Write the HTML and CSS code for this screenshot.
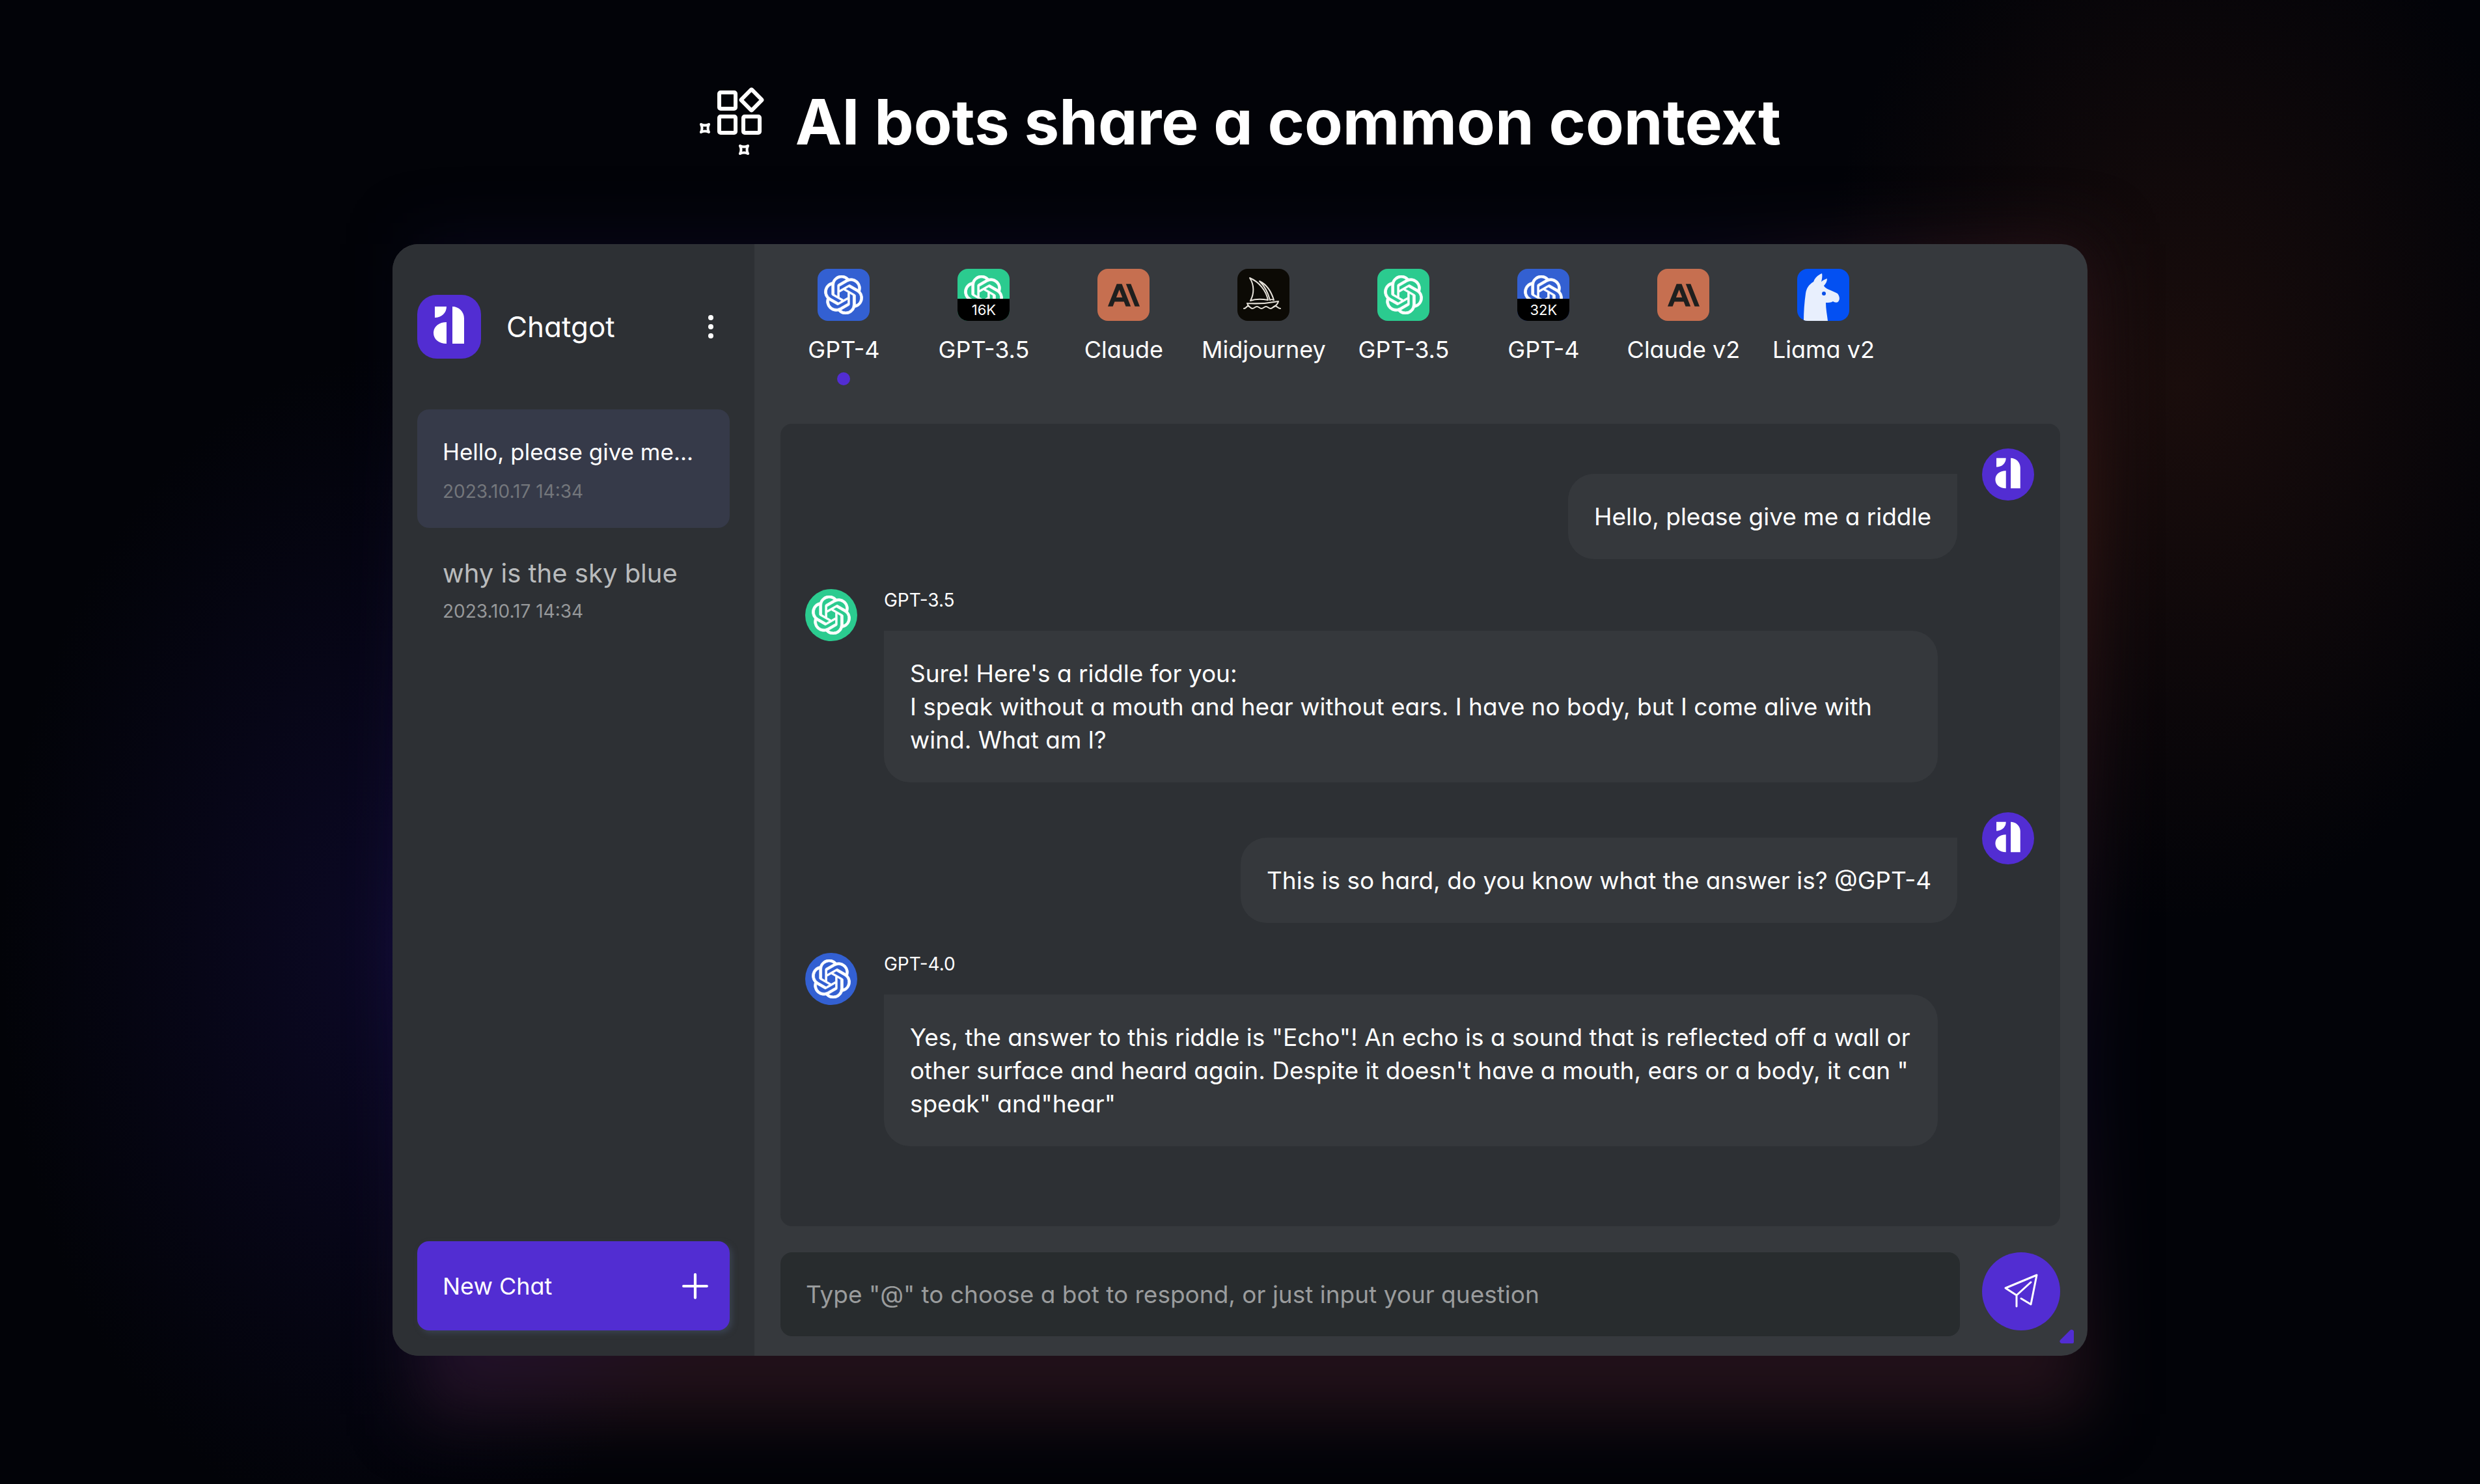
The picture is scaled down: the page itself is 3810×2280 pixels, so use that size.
FILE: index.html
```html
<!DOCTYPE html>
<html lang="en">
<head>
  <meta charset="UTF-8" />
  <meta name="viewport" content="width=device-width, initial-scale=1.0" />
  <title>Chatgot - AI bots share a common context</title>
  <link rel="stylesheet" href="styles.css">
</head>
<body>
  <!-- shared shapes -->
  <svg class="defs" width="0" height="0" aria-hidden="true">
    <symbol id="logo" viewBox="0 0 98 98">
      <path fill="#fff" d="M27 18h18c0 10-8 17-18 17zM45 42v33C33 75 25 68 25 58.500S33 42 45 42zM54 18c10 0 18 8 18 18v39H54z"/>
    </symbol>
    <symbol id="knot" viewBox="0 0 24 24">
      <path fill="#fff" stroke="#fff" stroke-width=".3" d="M22.2819 9.8211a5.9847 5.9847 0 0 0-.5157-4.9108 6.0462 6.0462 0 0 0-6.5098-2.9A6.0651 6.0651 0 0 0 4.9807 4.1818a5.9847 5.9847 0 0 0-3.9977 2.9 6.0462 6.0462 0 0 0 .7427 7.0966 5.98 5.98 0 0 0 .511 4.9107 6.051 6.051 0 0 0 6.5146 2.9001A5.9847 5.9847 0 0 0 13.2599 24a6.0557 6.0557 0 0 0 5.7718-4.2058 5.9894 5.9894 0 0 0 3.9977-2.9001 6.0557 6.0557 0 0 0-.7475-7.0729zm-9.022 12.6081a4.4755 4.4755 0 0 1-2.8764-1.0408l.1419-.0804 4.7783-2.7582a.7948.7948 0 0 0 .3927-.6813v-6.7369l2.02 1.1686a.071.071 0 0 1 .038.052v5.5826a4.504 4.504 0 0 1-4.4945 4.4944zm-9.6607-4.1254a4.4708 4.4708 0 0 1-.5346-3.0137l.142.0852 4.783 2.7582a.7712.7712 0 0 0 .7806 0l5.8428-3.3685v2.3324a.0804.0804 0 0 1-.0332.0615L9.74 19.9502a4.4992 4.4992 0 0 1-6.1408-1.6464zM2.3408 7.8956a4.485 4.485 0 0 1 2.3655-1.9728V11.6a.7664.7664 0 0 0 .3879.6765l5.8144 3.3543-2.0201 1.1685a.0757.0757 0 0 1-.071 0l-4.8303-2.7865A4.504 4.504 0 0 1 2.3408 7.872zm16.5963 3.8558L13.1038 8.364 15.1192 7.2a.0757.0757 0 0 1 .071 0l4.8303 2.7913a4.4944 4.4944 0 0 1-.6765 8.1042v-5.6772a.79.79 0 0 0-.407-.667zm2.0107-3.0231l-.142-.0852-4.7735-2.7818a.7759.7759 0 0 0-.7854 0L9.409 9.2297V6.8974a.0662.0662 0 0 1 .0284-.0615l4.8303-2.7866a4.4992 4.4992 0 0 1 6.6802 4.66zM8.3065 12.863l-2.02-1.1638a.0804.0804 0 0 1-.038-.0567V6.0742a4.4992 4.4992 0 0 1 7.3757-3.4537l-.142.0805L8.704 5.459a.7948.7948 0 0 0-.3927.6813zm1.0976-2.3654l2.602-1.4998 2.6069 1.4998v2.9994l-2.5974 1.4997-2.6067-1.4997Z"/>
    </symbol>
    <symbol id="claude" viewBox="0 0 24 24">
      <path fill="#1f1f1e" d="M17.304 3.541h-3.672l6.696 16.918H24zM6.696 3.541L0 20.459h3.744l1.37-3.553h7.005l1.369 3.553h3.744L10.536 3.541zm-.371 10.223l2.291-5.946 2.292 5.946z"/>
    </symbol>
  </svg>

  <header class="title">
    <svg class="title-icon" viewBox="0 0 100 104" fill="none" stroke="#fff" stroke-width="6" stroke-linejoin="round" aria-hidden="true">
      <rect x="31" y="8" width="25" height="25" rx="2"/>
      <rect x="31" y="45" width="25" height="25" rx="2"/>
      <rect x="68" y="45" width="25" height="25" rx="2"/>
      <rect x="69" y="8" width="23" height="23" rx="1" transform="rotate(45 80.500 19.500)"/>
      <g stroke-width="4">
        <path d="M3 57q6 3 12 0-3 6 0 12-6-3-12 0 3-6 0-12z"/>
        <path d="M63 90q6 3 12 0-3 6 0 12-6-3-12 0 3-6 0-12z"/>
      </g>
    </svg>
    <h1>AI bots share a common context</h1>
  </header>

  <div class="stage">
    <div class="window">
      <aside class="sidebar">
        <div class="brand">
          <svg class="brand-logo"><use href="#logo"/></svg>
          <span class="brand-name">Chatgot</span>
          <button class="menu" aria-label="Menu"><i></i><i></i><i></i></button>
        </div>
        <a class="chat active" href="#">
          <span class="chat-name">Hello, please give me...</span>
          <span class="chat-date">2023.10.17 14:34</span>
        </a>
        <a class="chat" href="#">
          <span class="chat-name">why is the sky blue</span>
          <span class="chat-date">2023.10.17 14:34</span>
        </a>
        <button class="new-chat">
          New Chat
          <svg viewBox="0 0 40 40" stroke="#fff" stroke-width="4" stroke-linecap="round" aria-hidden="true"><path d="M20 3v34M3 20h34"/></svg>
        </button>
      </aside>

      <main class="main">
        <nav class="bots">
          <button class="bot selected">
            <span class="bot-icon blue"><svg><use href="#knot"/></svg></span>
            GPT-4
          </button>
          <button class="bot">
            <span class="bot-icon green"><svg><use href="#knot"/></svg><b>16K</b></span>
            GPT-3.5
          </button>
          <button class="bot">
            <span class="bot-icon clay"><svg><use href="#claude"/></svg></span>
            Claude
          </button>
          <button class="bot">
            <span class="bot-icon black">
              <svg class="full" viewBox="0 0 80 80" fill="none" stroke="#e6e2da" stroke-width="2" stroke-linejoin="round" stroke-linecap="round">
                <path d="M19 14c7 11 7 24 1 35 8-3 17-3 27-1-3-15-14-28-28-34z"/>
                <path d="M34 19c11 5 18 16 22 29-2-1-5-1-6 0-3-12-8-21-16-29z"/>
                <path d="M15 53c16 1 32 0 48-3-1 4-4 7-8 9M15 53c1 2 1 3 3 5"/>
                <path d="M10 61c3 0 4-3 6-4 3 0 4 4 7 4s4-3 7-3 4 3 7 3 4-3 7-3 4 3 7 3 4-3 7-4c3 0 4 4 8 4"/>
              </svg>
            </span>
            Midjourney
          </button>
          <button class="bot">
            <span class="bot-icon green"><svg><use href="#knot"/></svg></span>
            GPT-3.5
          </button>
          <button class="bot">
            <span class="bot-icon blue"><svg><use href="#knot"/></svg><b>32K</b></span>
            GPT-4
          </button>
          <button class="bot">
            <span class="bot-icon clay"><svg><use href="#claude"/></svg></span>
            Claude v2
          </button>
          <button class="bot">
            <span class="bot-icon royal">
              <svg class="full" viewBox="0 0 80 80">
                <path fill="#e8effd" d="M10 80c0-14 1-28 3-42 1-8 5-14 12-18 2-6 6-10 13-13 1 4 0 9-1 13 2-2 5-4 9-5 0 4-2 8-5 11 2 5 12 7 21 12 4 5 3 9 2 11-2 4-6 3-9 1-3 2-7 2-11 2 0 10 2 19 3 28z"/>
                <circle cx="41" cy="38" r="3" fill="#0a4fe8"/>
              </svg>
            </span>
            Liama v2
          </button>
        </nav>

        <section class="talk">
          <div class="messages">
            <div class="msg user">
              <p class="bubble">Hello, please give me a riddle</p>
              <svg class="avatar purple"><use href="#logo"/></svg>
            </div>
            <div class="msg">
              <span class="avatar green"><svg><use href="#knot"/></svg></span>
              <div class="answer">
                <span class="who">GPT-3.5</span>
                <p class="bubble">Sure! Here's a riddle for you:<br>I speak without a mouth and hear without ears. I have no body, but I come alive with wind. What am l?</p>
              </div>
            </div>
            <div class="msg user">
              <p class="bubble">This is so hard, do you know what the answer is? @GPT-4</p>
              <svg class="avatar purple"><use href="#logo"/></svg>
            </div>
            <div class="msg">
              <span class="avatar blue"><svg><use href="#knot"/></svg></span>
              <div class="answer">
                <span class="who">GPT-4.0</span>
                <p class="bubble">Yes, the answer to this riddle is "Echo"! An echo is a sound that is reflected off a wall or other surface and heard again. Despite it doesn't have a mouth, ears or a body, it can " speak" and"hear"</p>
              </div>
            </div>
          </div>

          <form class="ask">
            <input type="text" aria-label="Your question" placeholder='Type "@" to choose a bot to respond, or just input your question'>
            <button class="send" type="button" aria-label="Send">
              <svg viewBox="0 0 56 56" fill="none" stroke="#fff" stroke-width="3" stroke-linecap="round" stroke-linejoin="round">
                <path d="M28 39l15 9 9-45L4 23l17 11L43 14M21 34v17"/>
              </svg>
            </button>
          </form>
          <svg class="corner" viewBox="0 0 22 22" aria-hidden="true"><path fill="#522dd2" d="M16 2q3-3 6 1v17q0 2-2 2H3q-4-2-2-5z"/></svg>
        </section>
      </main>
    </div>
  </div>
</body>
</html>
```
FILE: styles.css
```css
* {
  box-sizing: border-box;
}
body {
  margin: 0;
  padding: 132px 0 196px;
  min-height: 100vh;
  font-family: Inter, "Open Sans", sans-serif;
  font-feature-settings: "cv11";
  font-size: 36px;
  color: #fff;
  background:
    radial-gradient(ellipse 15% 36% at 88% 26%, #1a0d0c, transparent),
    radial-gradient(ellipse 16% 40% at 16% 64%, #0c0926, transparent),
    #020308;
}
button, input {
  font: inherit;
  font-feature-settings: inherit;
  color: inherit;
  border: none;
  padding: 0;
}
button {
  background: none;
  cursor: pointer;
}
.defs {
  position: absolute;
}

/* heading */
.title {
  display: flex;
  justify-content: center;
  gap: 48px;
}
.title-icon {
  width: 100px;
  height: 104px;
  margin-top: 2px;
}
h1 {
  margin: 0;
  font-size: 96px;
  line-height: 110px;
  font-weight: 700;
}

/* app window with the glow behind it */
.stage {
  position: relative;
  isolation: isolate;
  width: 68.35%;
  margin: 133px auto 0;
}
.stage::before {
  content: "";
  position: absolute;
  z-index: -1;
  inset: 0 0 -90px 40px;
  filter: blur(50px);
  background:
    radial-gradient(ellipse 25% 45% at 0 60%, #20125c, transparent),
    radial-gradient(ellipse 25% 50% at 100% 22%, #3e1b16, transparent),
    linear-gradient(to top, #26131a, transparent 30%),
    linear-gradient(#08071c, #08071c);
}
.window {
  display: flex;
  min-height: 1708px;
  border-radius: 40px;
  overflow: hidden;
  background: #36393d;
}

/* sidebar */
.sidebar {
  flex: 0 0 556px;
  display: flex;
  flex-direction: column;
  padding: 78px 38px 39px;
  background: #2d3034;
}
.brand {
  display: flex;
  align-items: center;
  margin-bottom: 78px;
}
.brand-logo {
  width: 98px;
  height: 98px;
  border-radius: 30px;
  background: #522dd2;
}
.brand-name {
  flex: 1;
  margin-left: 39px;
  font-size: 44px;
}
.menu {
  display: flex;
  flex-direction: column;
  gap: 6px;
  margin-right: 25px;
}
.menu i {
  width: 8px;
  height: 8px;
  border-radius: 50%;
  background: #fff;
}
.chat {
  display: block;
  padding: 38px 39px 28px;
  border-radius: 18px;
  text-decoration: none;
  color: #b9bbbc;
}
.chat-name, .chat-date {
  display: block;
  white-space: nowrap;
}
.chat-name {
  font-size: 40px;
  line-height: 64px;
}
.chat-date {
  font-size: 28px;
  line-height: 52px;
  color: #96989a;
}
.chat.active {
  padding-bottom: 22px;
  color: #fff;
  background: #363a49;
}
.chat.active .chat-name {
  font-size: 35px;
  line-height: 54px;
}
.chat.active .chat-date {
  line-height: 68px;
  color: #73767b;
}
.new-chat {
  display: flex;
  align-items: center;
  justify-content: space-between;
  height: 137px;
  margin-top: auto;
  padding: 0 32px 0 39px;
  border-radius: 18px;
  background: #522dd2;
  box-shadow: 4px 4px 8px #3a4250;
}
.new-chat svg {
  width: 42px;
  height: 42px;
}

/* bot picker */
.main {
  flex: 1;
  min-width: 0;
  display: flex;
  flex-direction: column;
}
.bots {
  display: flex;
  height: 235px;
  padding: 38px 30px 0;
}
.bot {
  flex: 0 1 215px;
  display: flex;
  flex-direction: column;
  align-items: center;
  line-height: 44px;
  white-space: nowrap;
}
.bot.selected::after {
  content: "";
  width: 20px;
  height: 20px;
  margin-top: 13px;
  border-radius: 50%;
  background: #522dd2;
}
.bot-icon {
  position: relative;
  display: flex;
  align-items: center;
  justify-content: center;
  width: 80px;
  height: 80px;
  margin-bottom: 22px;
  border-radius: 16px;
  overflow: hidden;
}
.bot-icon svg {
  width: 60px;
  height: 60px;
}
.bot-icon.clay svg {
  width: 49px;
  height: 49px;
}
.bot-icon svg.full {
  width: 80px;
  height: 80px;
}
.bot-icon b {
  position: absolute;
  left: 0;
  right: 0;
  bottom: 0;
  height: 34px;
  font-size: 22px;
  font-weight: 400;
  line-height: 34px;
  background: #000;
}
.blue { background: #3360d2; }
.green { background: #2bcb8f; }
.clay { background: #c66f50; }
.black { background: #0c0a05; }
.royal { background: #0350f2; }
.purple { background: #522dd2; }

/* conversation */
.talk {
  position: relative;
  flex: 1;
  display: flex;
  flex-direction: column;
  padding: 41px 42px 30px 40px;
}
.messages {
  flex: 1;
  display: flex;
  flex-direction: column;
  gap: 46px;
  padding: 38px 40px 38px 38px;
  border-radius: 18px;
  background: #2d3034;
}
.msg {
  display: flex;
  gap: 41px;
}
.user {
  justify-content: flex-end;
  gap: 38px;
}
.user .bubble {
  margin-top: 39px;
  border-radius: 40px 0 40px 40px;
}
.avatar {
  flex: none;
  display: flex;
  align-items: center;
  justify-content: center;
  width: 80px;
  height: 80px;
  border-radius: 50%;
}
.avatar svg {
  width: 60px;
  height: 60px;
}
.answer {
  flex: 1;
  margin-right: 148px;
}
.who {
  display: block;
  font-size: 28px;
  line-height: 34px;
}
.bubble {
  margin: 30px 0 0;
  padding: 40px;
  border-radius: 0 40px 40px 40px;
  font-size: 37px;
  line-height: 51px;
  background: #35383c;
}

/* question box */
.ask {
  display: flex;
  gap: 34px;
  margin-top: 40px;
}
.ask input {
  flex: 1;
  height: 129px;
  padding: 0 39px;
  border-radius: 18px;
  font-size: 37px;
  background: #282c2e;
}
.ask input::placeholder {
  color: #9a9c9d;
  opacity: 1;
}
.send {
  display: flex;
  align-items: center;
  justify-content: center;
  width: 120px;
  height: 120px;
  border-radius: 50%;
  background: #522dd2;
}
.send svg {
  width: 56px;
  height: 56px;
}
.corner {
  position: absolute;
  right: 21px;
  bottom: 19px;
  width: 22px;
  height: 22px;
}
```
